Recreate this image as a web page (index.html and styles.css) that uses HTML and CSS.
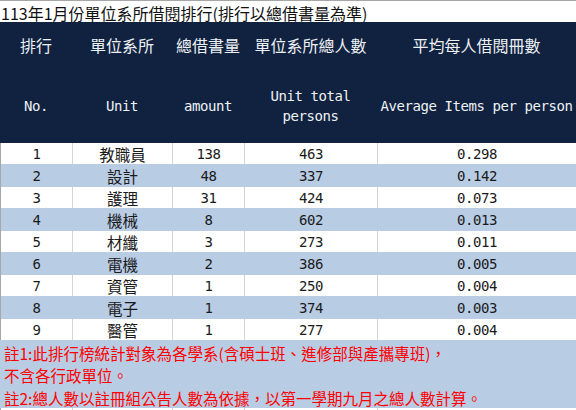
FILE: index.html
```html
<!DOCTYPE html>
<html lang="zh-Hant">
<head>
<meta charset="utf-8">
<title>113年1月份單位系所借閱排行</title>
<link rel="stylesheet" href="styles.css">
</head>
<body>
<div class="sheet">
  <div class="title">113年1月份單位系所借閱排行(排行以總借書量為準)</div>
  <div class="head">
    <div class="hcell">排行</div>
    <div class="hcell">單位系所</div>
    <div class="hcell">總借書量</div>
    <div class="hcell">單位系所總人數</div>
    <div class="hcell">平均每人借閱冊數</div>
    <div class="hcell en">No.</div>
    <div class="hcell en">Unit</div>
    <div class="hcell en">amount</div>
    <div class="hcell en">Unit total<br>persons</div>
    <div class="hcell en">Average Items per person</div>
  </div>
  <div class="rows">
    <div class="row"><div class="cell num">1</div><div class="cell zh">教職員</div><div class="cell num">138</div><div class="cell num">463</div><div class="cell num">0.298</div></div>
    <div class="row alt"><div class="cell num">2</div><div class="cell zh">設計</div><div class="cell num">48</div><div class="cell num">337</div><div class="cell num">0.142</div></div>
    <div class="row"><div class="cell num">3</div><div class="cell zh">護理</div><div class="cell num">31</div><div class="cell num">424</div><div class="cell num">0.073</div></div>
    <div class="row alt"><div class="cell num">4</div><div class="cell zh">機械</div><div class="cell num">8</div><div class="cell num">602</div><div class="cell num">0.013</div></div>
    <div class="row"><div class="cell num">5</div><div class="cell zh">材纖</div><div class="cell num">3</div><div class="cell num">273</div><div class="cell num">0.011</div></div>
    <div class="row alt"><div class="cell num">6</div><div class="cell zh">電機</div><div class="cell num">2</div><div class="cell num">386</div><div class="cell num">0.005</div></div>
    <div class="row"><div class="cell num">7</div><div class="cell zh">資管</div><div class="cell num">1</div><div class="cell num">250</div><div class="cell num">0.004</div></div>
    <div class="row alt"><div class="cell num">8</div><div class="cell zh">電子</div><div class="cell num">1</div><div class="cell num">374</div><div class="cell num">0.003</div></div>
    <div class="row"><div class="cell num">9</div><div class="cell zh">醫管</div><div class="cell num">1</div><div class="cell num">277</div><div class="cell num">0.004</div></div>
  </div>
  <div class="notes">
    <p class="note">註1:此排行榜統計對象為各學系(含碩士班、進修部與產攜專班)，</p>
    <p class="note">不含各行政單位。</p>
    <p class="note">註2:總人數以註冊組公告人數為依據，以第一學期九月之總人數計算。</p>
  </div>
  <div class="row tail"><div class="cell"></div><div class="cell"></div><div class="cell"></div><div class="cell"></div><div class="cell"></div></div>
</div>
</body>
</html>
```

FILE: styles.css
```css
* { box-sizing: border-box; }

html, body {
  margin: 0;
  padding: 0;
  background: #ffffff;
}

body {
  width: 576px;
  height: 410px;
  overflow: hidden;
  font-family: "Noto Sans CJK TC", "Noto Sans CJK SC", sans-serif;
  font-size: 16px;
  color: #000000;
}

.sheet {
  display: flex;
  flex-direction: column;
  width: 576px;
}

.title {
  height: 22px;
  border-top: 1px solid #a6a6a6;
  padding: 2px 0 0 1px;
  line-height: 20px;
  white-space: nowrap;
  color: #111111;
}

.head {
  display: grid;
  grid-template-columns: 72px 100px 72px 133px 199px;
  grid-template-rows: 46px 75px;
  background: #10223f;
  color: #eef1f5;
}

.hcell {
  display: flex;
  align-items: center;
  justify-content: center;
  text-align: center;
  white-space: nowrap;
  line-height: 20px;
}

.hcell.en {
  font-family: "DejaVu Sans Mono", "Liberation Mono", monospace;
  font-size: 14px;
  letter-spacing: -0.43px;
  padding-top: 1px;
}

.rows {
  display: flex;
  flex-direction: column;
}

.row {
  display: grid;
  grid-template-columns: 72px 100px 72px 133px 199px;
  height: 21px;
  background: #ffffff;
}

.row.alt {
  height: 23px;
  background: #b8cce4;
}

.cell {
  display: flex;
  align-items: center;
  justify-content: center;
  padding-top: 1px;
  border-left: 1px solid #d4d4d4;
  white-space: nowrap;
  line-height: 18px;
}

.cell:first-child {
  border-left-color: #a8a8a8;
}

.row.alt .cell {
  border-left-color: #b8cce4;
}

.row.alt .cell:first-child {
  border-left-color: #a8a8a8;
}

.cell.num {
  font-family: "DejaVu Sans Mono", "Liberation Mono", monospace;
  font-size: 14px;
  letter-spacing: -0.43px;
  color: #1a1a1a;
}

.cell.zh {
  font-size: 15.5px;
  color: #1a1a1a;
}

.notes {
  height: 68px;
  background: #b8cce4;
  padding: 1.5px 0 0 4px;
  color: #ff0000;
  font-size: 15.5px;
}

.note {
  margin: 0;
  line-height: 22.5px;
  white-space: nowrap;
}

.row.tail {
  height: 2px;
}

.row.tail .cell {
  padding: 0;
}
```
